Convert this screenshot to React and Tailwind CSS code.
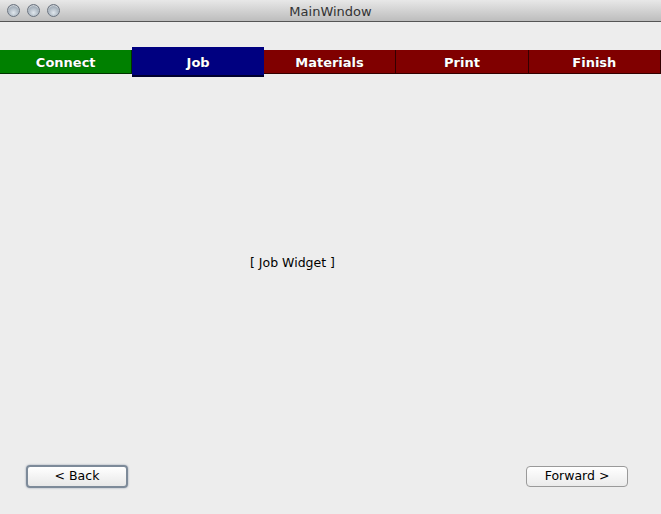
import React from "react";

const TABS = [
  { name: "Connect", bg: "bg-[#008000]", active: false },
  { name: "Job", bg: "bg-[#000080]", active: true },
  { name: "Materials", bg: "bg-[#800000]", active: false },
  { name: "Print", bg: "bg-[#800000]", active: false },
  { name: "Finish", bg: "bg-[#800000]", active: false },
];

function Light() {
  return (
    <div className="w-[13px] h-[13px] rounded-full border border-[#6b7480] bg-[radial-gradient(circle_at_50%_70%,#dfe6ec_0%,#a9b4bf_55%,#7f8a96_100%)] shadow-[inset_0_1px_1px_rgba(255,255,255,0.6)]" />
  );
}

export default function App() {
  return (
    <div className="w-[661px] h-[514px] flex flex-col bg-[#ededed] overflow-hidden" style={{ fontFamily: '"DejaVu Sans", "Lucida Grande", sans-serif' }}>
      {/* Title bar */}
      <div className="h-[22px] flex-shrink-0 flex items-center relative bg-gradient-to-b from-[#e8e8e8] to-[#bdbdbd] border-b border-[#555]">
        <div className="flex items-center gap-[7px] pl-[7px]">
          <Light />
          <Light />
          <Light />
        </div>
        <div className="absolute inset-0 pt-[2px] flex items-center justify-center text-[13px] text-[#333]">
          MainWindow
        </div>
      </div>

      {/* Tabs */}
      <div className="mt-[25px] h-[30px] flex items-center">
        {TABS.map(t => (
          <div
            key={t.name}
            className={
              t.active
                ? `${t.bg} flex-1 h-[30px] pt-[3px] flex items-center justify-center text-white font-bold text-[13px] border-b-2 border-[#000030]`
                : `${t.bg} flex-1 h-[24px] pt-[2px] flex items-center justify-center text-white font-bold text-[13px] border-r border-b border-black/60`
            }
            style={{ textShadow: "0 0 1px rgba(0,0,0,0.6)" }}
          >
            {t.name}
          </div>
        ))}
      </div>

      {/* Body */}
      <div className="flex-1 flex items-center justify-center pr-[76px] pb-[16px] text-[12.5px] text-black">
        [ Job Widget ]
      </div>

      {/* Buttons */}
      <div className="flex justify-between pl-[26px] pr-[33px] pb-[26px] pt-0">
        <button className="w-[102px] h-[23px] rounded-[4px] border-2 border-[#7d8a99] bg-gradient-to-b from-white to-[#e8e8e8] text-[12.5px] text-black shadow-[0_0_2px_rgba(80,100,130,0.6)]">
          &lt; Back
        </button>
        <button className="w-[102px] h-[21px] mt-[1px] rounded-[4px] border border-[#9a9a9a] bg-gradient-to-b from-white to-[#ebebeb] text-[12.5px] text-black">
          Forward &gt;
        </button>
      </div>
    </div>
  );
}
